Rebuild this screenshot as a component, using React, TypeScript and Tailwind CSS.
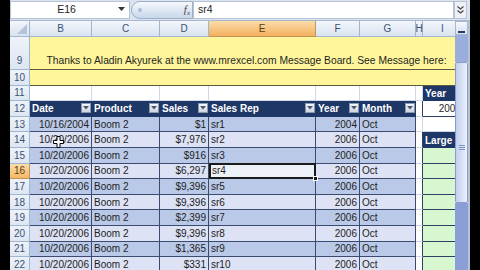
import React from 'react';

const FONT = { fontFamily: '"Liberation Sans", Arial, sans-serif' };

const DATA = [
  ['13', '10/16/2004', '$1', 'sr1', '2004'],
  ['14', '10/20/2006', '$7,976', 'sr2', '2006'],
  ['15', '10/20/2006', '$916', 'sr3', '2006'],
  ['16', '10/20/2006', '$6,297', 'sr4', '2006'],
  ['17', '10/20/2006', '$9,396', 'sr5', '2006'],
  ['18', '10/20/2006', '$9,396', 'sr6', '2006'],
  ['19', '10/20/2006', '$2,399', 'sr7', '2006'],
  ['20', '10/20/2006', '$9,396', 'sr8', '2006'],
  ['21', '10/20/2006', '$1,365', 'sr9', '2006'],
  ['22', '10/20/2006', '$331', 'sr10', '2006'],
];

function RowHead({ n, active, tall }: { n: string; active?: boolean; tall?: boolean }) {
  return (
    <div
      className={`w-[20px] shrink-0 border-r border-b flex justify-center text-[10px] ${
        tall ? 'items-end pb-[1px]' : 'items-center'
      } ${
        active
          ? 'bg-gradient-to-b from-[#fbdca9] to-[#f4b862] border-[#c4935a] text-[#5a3d14]'
          : 'bg-gradient-to-b from-[#eef3fa] to-[#dde6f2] border-[#9eb6ce] text-[#3d5273]'
      }`}
    >
      {n}
    </div>
  );
}

function Filter() {
  return (
    <div className="w-[10px] h-[10px] shrink-0 bg-gradient-to-b from-[#f4f6fa] to-[#cfd6e3] border border-[#8c97ad] flex items-center justify-center">
      <svg width="6" height="4" viewBox="0 0 6 4">
        <path d="M0 0h6L3 3.5z" fill="#4a5670" />
      </svg>
    </div>
  );
}

function HeadCell({ w, label }: { w: string; label: string }) {
  return (
    <div className={`${w} shrink-0 bg-[#1d3767] flex items-center justify-between pl-[2px] pr-[1px] text-white font-bold text-[10px] border-b border-[#1d3767]`}>
      <span>{label}</span>
      <Filter />
    </div>
  );
}

function ColHead({ w, label, active }: { w: string; label: string; active?: boolean }) {
  return (
    <div
      className={`${w} shrink-0 border-r border-b flex items-center justify-center text-[10px] ${
        active
          ? 'bg-gradient-to-b from-[#fbdcaa] to-[#f3b05c] border-[#c4935a] text-[#5a3d14]'
          : 'bg-gradient-to-b from-[#f3f6fb] to-[#d9e3f0] border-[#9eb6ce] text-[#3d5273]'
      }`}
    >
      {label}
    </div>
  );
}

export default function App() {
  return (
    <div className="w-[480px] h-[270px] bg-black flex overflow-hidden text-[#1e1e1e]" style={FONT}>
      <div className="w-[10px] shrink-0 bg-black" />
      <div className="w-[460px] shrink-0 flex flex-col bg-[#dbe3ee]">
        {/* formula bar */}
        <div className="h-[21px] shrink-0 flex items-center pt-[1px] pb-[2px] border-b border-[#a9b8cc]">
          <div className="w-[120px] h-[18px] bg-white border border-[#b6c3d4] flex items-center text-[10.5px]">
            <span className="flex-1 text-center pl-[4px]">E16</span>
            <svg width="7" height="5" viewBox="0 0 7 5" className="mr-[4px]">
              <path d="M0 0h7L3.5 4z" fill="#333" />
            </svg>
          </div>
          <div className="ml-[1px] w-[62px] h-[18px] rounded-l-full bg-gradient-to-b from-[#f4f8fc] to-[#c9d7ea] border border-[#9db0c9] flex items-center justify-between pl-[6px] pr-[2px]">
            <span className="w-[4px] h-[4px] rounded-full bg-[#aebfd6]" />
            <span className="text-[11px] italic text-[#444]" style={{ fontFamily: '"Liberation Serif", serif' }}>
              f<sub className="text-[7px]">x</sub>
            </span>
          </div>
          <div className="flex-1 h-[18px] bg-white border border-[#b6c3d4] flex items-center pl-[4px] text-[10.5px]">sr4</div>
          <div className="w-[13px] h-[18px] flex items-center justify-center bg-[#eef2f8] border border-[#b6c3d4]">
            <svg width="7" height="8" viewBox="0 0 7 8">
              <path d="M0.5 0.5l3 2.5 3-2.5M0.5 4.5l3 2.5 3-2.5" stroke="#444" fill="none" strokeWidth="1.2" />
            </svg>
          </div>
          <div className="w-[3px]" />
        </div>

        <div className="flex-1 flex min-h-0">
          {/* sheet */}
          <div className="w-[445px] shrink-0 overflow-hidden bg-white relative">
            {/* column header */}
            <div className="flex h-[16px]">
              <div className="w-[20px] shrink-0 border-r border-b border-[#9eb6ce] bg-gradient-to-b from-[#f3f6fb] to-[#d9e3f0] relative">
                <svg width="10" height="10" viewBox="0 0 10 10" className="absolute right-[2px] bottom-[2px]">
                  <path d="M10 0v10H0z" fill="#b4c3d8" />
                </svg>
              </div>
              <ColHead w="w-[62px]" label="B" />
              <ColHead w="w-[68px]" label="C" />
              <ColHead w="w-[49px]" label="D" />
              <ColHead w="w-[107px]" label="E" active />
              <ColHead w="w-[44px]" label="F" />
              <ColHead w="w-[56px]" label="G" />
              <ColHead w="w-[7px]" label="H" />
              <ColHead w="w-[40px]" label="I" />
            </div>

            {/* row 9 */}
            <div className="flex h-[33px]">
              <RowHead n="9" tall />
              <div className="w-[433px] shrink-0 bg-[#fff69b] border-b border-[#5a5a40] flex items-end justify-center pb-[1px] text-[10.3px] whitespace-nowrap">
                Thanks to Aladin Akyurek at the www.mrexcel.com Message Board. See Message here:
              </div>
            </div>
            {/* row 10 */}
            <div className="flex h-[15.6px]">
              <RowHead n="10" />
              <div className="w-[433px] shrink-0 bg-[#fff69b] border-b border-[#5a5a40]" />
            </div>
            {/* row 11 */}
            <div className="flex h-[15.6px]">
              <RowHead n="11" />
              <div className="w-[62px] shrink-0 border-r border-b border-[#d0d7e5]" />
              <div className="w-[68px] shrink-0 border-r border-b border-[#d0d7e5]" />
              <div className="w-[49px] shrink-0 border-r border-b border-[#d0d7e5]" />
              <div className="w-[107px] shrink-0 border-r border-b border-[#d0d7e5]" />
              <div className="w-[44px] shrink-0 border-r border-b border-[#d0d7e5]" />
              <div className="w-[56px] shrink-0 border-r border-b border-[#d0d7e5]" />
              <div className="w-[7px] shrink-0 border-r border-b border-[#d0d7e5]" />
              <div className="w-[40px] shrink-0 bg-[#1d3767] text-white font-bold text-[10px] flex items-center pl-[2px]">Year</div>
            </div>
            {/* row 12: table header */}
            <div className="flex h-[15.6px]">
              <RowHead n="12" />
              <HeadCell w="w-[62px]" label="Date" />
              <HeadCell w="w-[68px]" label="Product" />
              <HeadCell w="w-[49px]" label="Sales" />
              <HeadCell w="w-[107px]" label="Sales Rep" />
              <HeadCell w="w-[44px]" label="Year" />
              <HeadCell w="w-[56px]" label="Month" />
              <div className="w-[7px] shrink-0 border-r border-b border-r-[#2f3f66] border-b-[#d0d7e5]" />
              <div className="w-[40px] shrink-0 border-b border-[#2f3f66] flex items-center justify-end pr-[2px] text-[10px]">2006</div>
            </div>
            {/* data rows */}
            {DATA.map(([n, date, sales, rep, year], i) => {
              const band = i % 2 === 0 ? 'bg-[#b9c9e7]' : 'bg-[#dde2f4]';
              const cell = `shrink-0 border-r border-b border-[#3a4a70] flex items-center text-[10px] whitespace-nowrap overflow-hidden ${band}`;
              const active = n === '16';
              return (
                <div key={n} className="flex h-[15.6px]">
                  <RowHead n={n} active={active} />
                  <div className={`w-[62px] justify-end pr-[2px] ${cell}`}>{date}</div>
                  <div className={`w-[68px] pl-[2px] ${cell}`}>Boom 2</div>
                  <div className={`w-[49px] justify-end pr-[2px] ${cell}`}>{sales}</div>
                  {active ? (
                    <div className="w-[107px] shrink-0 relative border-2 border-[#1a1a1a] bg-[#eef0f8] flex items-center pl-[1px] text-[10px] -mt-[1px] h-[16.6px]">
                      {rep}
                      <div className="absolute -right-[4px] -bottom-[4px] w-[5px] h-[5px] bg-[#1a1a1a] border border-white" />
                    </div>
                  ) : (
                    <div className={`w-[107px] pl-[2px] ${cell}`}>{rep}</div>
                  )}
                  <div className={`w-[44px] justify-end pr-[2px] ${cell}`}>{year}</div>
                  <div className={`w-[56px] pl-[2px] ${cell}`}>Oct</div>
                  {n === '13' ? (
                    <>
                      <div className="w-[7px] shrink-0 border-r border-b border-[#d0d7e5]" />
                      <div className="w-[40px] shrink-0 border-b border-[#d0d7e5]" />
                    </>
                  ) : (
                    <>
                      <div className="w-[7px] shrink-0 border-r border-b border-r-[#2f3f66] border-b-[#d0d7e5]" />
                      {n === '14' ? (
                        <div className="w-[40px] shrink-0 bg-[#1d3767] text-white font-bold text-[10px] flex items-center pl-[2px]">Large</div>
                      ) : (
                        <div className="w-[40px] shrink-0 bg-[#d6f7cf] border-b border-[#2f3f66]" />
                      )}
                    </>
                  )}
                </div>
              );
            })}

            {/* mouse cursor */}
            <svg width="11" height="12" viewBox="0 0 11 12" className="absolute left-[43px] top-[115px]">
              <path d="M4 0.5h3v4h3.5v3H7v4H4v-4H0.5v-3H4z" fill="white" stroke="black" strokeWidth="1" />
            </svg>
          </div>

          {/* vertical scrollbar */}
          <div className="w-[13px] shrink-0 flex flex-col bg-[#dfe7f3]">
            <div className="h-[14px] shrink-0 bg-gradient-to-b from-[#f6f9fd] to-[#d5e0ef] border border-[#a7b8d0] flex items-end justify-center pb-[1px]">
              <div className="w-[7px] h-[2px] bg-[#2b3b5c]" />
            </div>
            <div className="h-[27px] shrink-0 bg-[#9aaedb]" />
            <div className="h-[141px] shrink-0 rounded-[2px] border border-[#8a9ccb] bg-gradient-to-r from-[#c3d1ee] via-[#d6e0f4] to-[#eef2fb] flex items-end justify-center pb-[52px]">
              <div className="flex flex-col gap-[1px]">
                <div className="w-[6px] h-[1px] bg-[#7f92bf]" />
                <div className="w-[6px] h-[1px] bg-[#7f92bf]" />
                <div className="w-[6px] h-[1px] bg-[#7f92bf]" />
              </div>
            </div>
            <div className="flex-1 bg-[#8b9fd6]" />
          </div>
          <div className="w-[2px] shrink-0 bg-[#b8c2d4]" />
        </div>
      </div>
      <div className="w-[10px] shrink-0 bg-black" />
    </div>
  );
}
